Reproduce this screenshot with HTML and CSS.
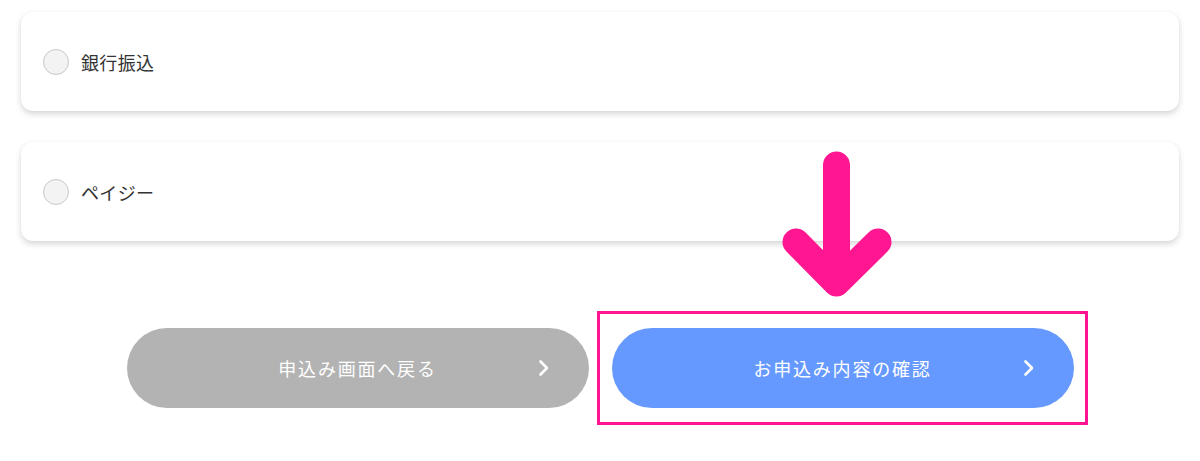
FILE: index.html
```html
<!DOCTYPE html>
<html lang="ja">
<head>
<meta charset="utf-8">
<link rel="stylesheet" href="styles.css">
</head>
<body>
<div class="page">
  <div class="cards">
    <label class="card"><span class="radio"></span><span class="label">銀行振込</span></label>
    <label class="card"><span class="radio"></span><span class="label">ペイジー</span></label>
  </div>
  <div class="buttons">
    <div class="btn btn-gray"><span class="btn-text">申込み画面へ戻る</span>
      <svg class="chev" width="14" height="18" viewBox="0 0 14 18"><path d="M3.5 2.5 L10 9 L3.5 15.5" fill="none" stroke="#fff" stroke-width="2.6" stroke-linecap="round" stroke-linejoin="round"/></svg>
    </div>
    <div class="btn-wrap">
      <div class="btn btn-blue"><span class="btn-text">お申込み内容の確認</span>
        <svg class="chev" width="14" height="18" viewBox="0 0 14 18"><path d="M3.5 2.5 L10 9 L3.5 15.5" fill="none" stroke="#fff" stroke-width="2.6" stroke-linecap="round" stroke-linejoin="round"/></svg>
      </div>
    </div>
  </div>
  <svg class="arrow" width="1200" height="461" viewBox="0 0 1200 461"><path d="M836.5 165 V283 M796 242 L836.5 283 L878 242" fill="none" stroke="#ff1690" stroke-width="27" stroke-linecap="round" stroke-linejoin="round"/></svg>
</div>
</body>
</html>
```
FILE: styles.css
```css
html, body { margin: 0; padding: 0; background: #fff; }
body { font-family: "Noto Sans CJK JP", "Noto Sans", sans-serif; width: 1200px; height: 461px; overflow: hidden; }
.page { position: relative; width: 1200px; height: 461px; }
.cards { display: flex; flex-direction: column; gap: 31px; padding: 12px 21px 0 21px; }
.card { display: flex; align-items: center; height: 99px; background: #fff; border-radius: 12px; box-shadow: 0 3px 6px rgba(0,0,0,0.16), 0 0 2px rgba(0,0,0,0.04); padding-left: 22px; box-sizing: border-box; }
.radio { width: 24px; height: 24px; border-radius: 50%; background: #f3f3f3; border: 1px solid #c8c8c8; flex: none; }
.label { margin-left: 12px; font-size: 18px; color: #333; letter-spacing: 0.02em; }
.buttons { display: flex; justify-content: center; gap: 23px; margin-top: 87px; }
.btn { position: relative; width: 462px; height: 80px; border-radius: 40px; display: flex; align-items: center; justify-content: center; color: #fff; }
.btn-gray { background: #b3b3b3; }
.btn-blue { background: #6699ff; }
.btn-text { font-size: 18px; letter-spacing: 0.1em; }
.chev { position: absolute; right: 38px; top: 31px; }
.btn-wrap { position: relative; }
.btn-wrap::before { content: ""; position: absolute; left: -15px; right: -14px; top: -17px; bottom: -17px; border: 3px solid #ff1493; }
.arrow { position: absolute; left: 0; top: 0; pointer-events: none; }
```
